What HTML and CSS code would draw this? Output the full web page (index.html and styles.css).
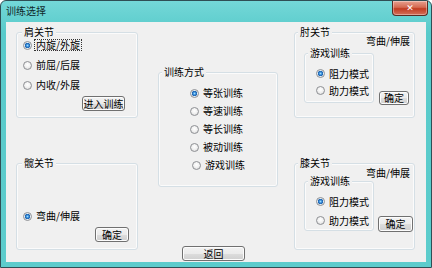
FILE: index.html
```html
<!DOCTYPE html>
<html lang="zh-CN">
<head>
    <meta charset="UTF-8">
    <meta name="viewport" content="width=device-width, initial-scale=1.0">
    <title>训练选择</title>
    <link rel="stylesheet" href="styles.css">
</head>
<body>
    <div class="window">
        <div class="titlebar">
            <span class="title">训练选择</span>
            <button class="close">&#x2715;</button>
        </div>

        <div class="client">
            <!-- left column: shoulder and hip -->
            <div class="col col-left">
                <div class="group group-shoulder">
                    <div class="group-head"><span class="group-title">肩关节</span></div>
                    <div class="options options-shoulder">
                        <label class="option"><span class="radio checked"></span><span class="focus">内旋/外旋</span></label>
                        <label class="option"><span class="radio"></span><span>前屈/后展</span></label>
                        <label class="option"><span class="radio"></span><span>内收/外展</span></label>
                    </div>
                    <button class="btn btn-enter">进入训练</button>
                </div>

                <div class="group group-hip">
                    <div class="group-head"><span class="group-title">髋关节</span></div>
                    <div class="options options-hip">
                        <label class="option"><span class="radio checked"></span><span>弯曲/伸展</span></label>
                    </div>
                    <button class="btn btn-hip">确定</button>
                </div>
            </div>

            <!-- middle column: training mode -->
            <div class="col col-mid">
                <div class="group group-mode">
                    <div class="group-head"><span class="group-title">训练方式</span></div>
                    <div class="options options-mode">
                        <label class="option"><span class="radio checked"></span><span>等张训练</span></label>
                        <label class="option"><span class="radio"></span><span>等速训练</span></label>
                        <label class="option"><span class="radio"></span><span>等长训练</span></label>
                        <label class="option"><span class="radio"></span><span>被动训练</span></label>
                        <label class="option option-game"><span class="radio"></span><span>游戏训练</span></label>
                    </div>
                </div>
                <button class="btn btn-back">返回</button>
            </div>

            <!-- right column: elbow and knee -->
            <div class="col col-right">
                <div class="group group-elbow">
                    <div class="group-head head-split">
                        <span class="group-title">肘关节</span>
                        <span class="motion">弯曲/伸展</span>
                    </div>
                    <div class="sub-row">
                        <div class="group inner-group">
                            <div class="group-head"><span class="group-title">游戏训练</span></div>
                            <div class="options options-game">
                                <label class="option"><span class="radio checked"></span><span>阻力模式</span></label>
                                <label class="option"><span class="radio"></span><span>助力模式</span></label>
                            </div>
                        </div>
                        <button class="btn btn-ok">确定</button>
                    </div>
                </div>

                <div class="group group-knee">
                    <div class="group-head head-split">
                        <span class="group-title">膝关节</span>
                        <span class="motion">弯曲/伸展</span>
                    </div>
                    <div class="sub-row">
                        <div class="group inner-group">
                            <div class="group-head"><span class="group-title">游戏训练</span></div>
                            <div class="options options-game">
                                <label class="option"><span class="radio checked"></span><span>阻力模式</span></label>
                                <label class="option"><span class="radio"></span><span>助力模式</span></label>
                            </div>
                        </div>
                        <button class="btn btn-ok btn-knee">确定</button>
                    </div>
                </div>
            </div>
        </div>
    </div>
</body>
</html>
```

FILE: styles.css
```css
body {
    margin: 0;
    padding: 0;
    background-color: #ffffff;
    font-family: "Noto Sans CJK SC", "Noto Sans", sans-serif;
    font-size: 10px;
    color: #000000;
}
.window {
    width: 432px;
    height: 268px;
    box-sizing: border-box;
    border: 1px solid #2f4f55;
    border-radius: 6px 6px 0 0;
    background: linear-gradient(to bottom, #74d8d8 0%, #58caca 12%, #5ccccc 100%);
    padding: 0 5px 5px 5px;
}
.titlebar {
    height: 21px;
    display: flex;
    justify-content: space-between;
    align-items: flex-start;
}
.title {
    margin-top: 4px;
    line-height: 12px;
    color: #10282a;
}
.close {
    width: 36px;
    height: 15px;
    margin-right: -2px;
    padding: 0;
    border: 1px solid #5b2b22;
    border-top: none;
    border-radius: 0 0 4px 4px;
    background: linear-gradient(to bottom, #e7a08f 0%, #d46a52 45%, #c23c22 55%, #d4705a 100%);
    box-shadow: inset 0 0 0 1px rgba(255, 255, 255, 0.35);
    color: #ffffff;
    font-family: "DejaVu Sans", sans-serif;
    font-size: 9px;
    font-weight: bold;
    line-height: 13px;
}
.client {
    height: 240px;
    box-sizing: border-box;
    background-color: #f0f0f0;
    padding: 10px 0 0 10px;
    display: flex;
    align-items: flex-start;
}
.col {
    display: flex;
    flex-direction: column;
}
.col-left {
    width: 122px;
}
.col-mid {
    width: 120px;
    margin-left: 20px;
    margin-top: 40px;
}
.col-right {
    width: 121px;
    margin-left: 16px;
}

/* group boxes */
.group {
    box-sizing: border-box;
    border: 1px solid #d5dfe5;
    border-radius: 3px;
    box-shadow: inset 0 0 0 1px #fbfbfb;
    display: flex;
    flex-direction: column;
}
.group-head {
    margin-top: -7px;
    height: 12px;
    line-height: 12px;
}
.group-title {
    display: block;
    width: fit-content;
    padding: 0 2px;
    margin-left: 5px;
    background-color: #f0f0f0;
}
.head-split {
    display: flex;
    justify-content: space-between;
    align-items: flex-start;
    padding-right: 4px;
}
.head-split .group-title {
    margin-left: 3px;
}
.motion {
    margin-top: 9px;
}
.group-knee .motion {
    margin-top: 10px;
}

.group-shoulder {
    height: 86px;
}
.group-hip {
    height: 87px;
    margin-top: 45px;
}
.group-mode {
    height: 115px;
}
.group-mode .group-title {
    margin-left: 3px;
}
.group-elbow {
    height: 86px;
}
.group-knee {
    height: 87px;
    margin-top: 45px;
}

/* radio options */
.options {
    display: flex;
    flex-direction: column;
}
.option {
    display: flex;
    align-items: center;
    gap: 4px;
    height: 20px;
    line-height: 12px;
}
.options-shoulder {
    margin-top: -3px;
    padding-left: 6px;
}
.options-hip {
    margin-top: 37px;
    padding-left: 6px;
}
.options-mode {
    margin-top: 6px;
    padding-left: 31px;
}
.options-mode .option {
    height: 18px;
}
.option-game {
    margin-left: 2px;
}
.radio {
    width: 9px;
    height: 9px;
    box-sizing: border-box;
    border: 1px solid #8e9094;
    border-radius: 50%;
    background: radial-gradient(circle at 50% 40%, #ffffff 0%, #f2f2f2 45%, #d4d4d4 100%);
    flex: none;
}
.radio.checked {
    background: radial-gradient(circle, #9adcff 0, #2a7fd0 1.6px, #1f5fa8 2.5px, #e4ecf4 3px, #f6f6f6 100%);
}
.focus {
    outline: 1px dotted #333333;
    line-height: 10px;
    padding: 0 1px;
    margin-left: -1px;
}

/* inner game group */
.sub-row {
    display: flex;
    align-items: flex-start;
}
.group-elbow .sub-row {
    margin-top: 15px;
}
.group-knee .sub-row {
    margin-top: 12px;
}
.inner-group {
    width: 70px;
    height: 50px;
    margin-left: 9px;
}
.inner-group .group-title {
    margin-left: 3px;
}
.options-game {
    margin-top: 6px;
    padding-left: 11px;
}
.options-game .option {
    height: 17px;
}
.group-knee .options-game .option {
    height: 19px;
}
.group-knee .options-game {
    margin-top: 5px;
}

/* buttons */
.btn {
    box-sizing: border-box;
    padding: 0;
    border: 1px solid #707070;
    border-radius: 3px;
    background: linear-gradient(to bottom, #f2f2f2 0%, #ebebeb 50%, #dddddd 51%, #cfcfcf 100%);
    box-shadow: inset 0 0 0 1px #fcfcfc;
    font-family: inherit;
    font-size: 10px;
    line-height: 12px;
    color: #000000;
}
.btn-enter {
    width: 43px;
    height: 15px;
    margin-top: 1px;
    margin-right: 12px;
    align-self: flex-end;
}
.btn-hip {
    width: 34px;
    height: 15px;
    margin-top: 1px;
    margin-right: 8px;
    align-self: flex-end;
}
.btn-back {
    width: 63px;
    height: 15px;
    margin-top: 59px;
    margin-left: 24px;
}
.btn-ok {
    width: 30px;
    height: 14px;
    margin-left: 5px;
    margin-top: 38px;
}
.btn-knee {
    width: 35px;
    height: 16px;
    margin-left: 4px;
    margin-top: 35px;
}
```
